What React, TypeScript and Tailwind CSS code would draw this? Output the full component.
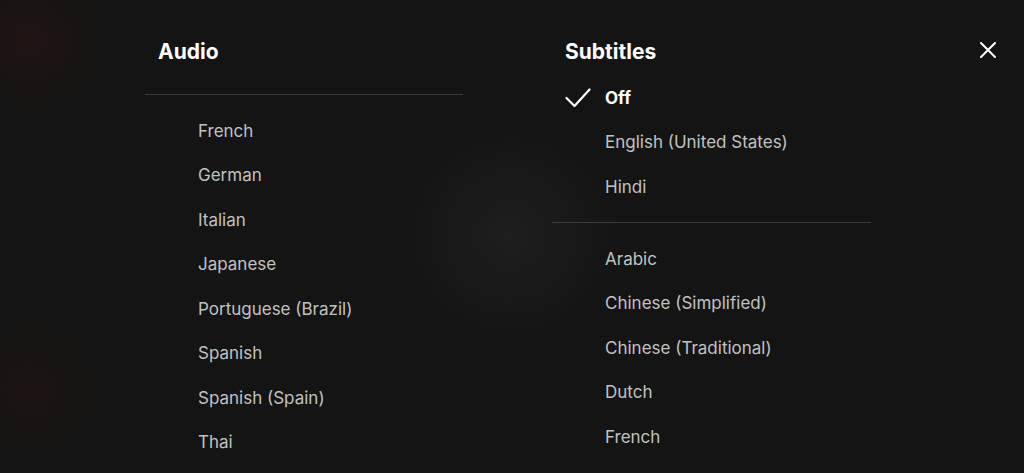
import React from "react";

const audio = ["French", "German", "Italian", "Japanese", "Portuguese (Brazil)", "Spanish", "Spanish (Spain)", "Thai"];
const subsTop = ["English (United States)", "Hindi"];
const subsBottom = ["Arabic", "Chinese (Simplified)", "Chinese (Traditional)", "Dutch", "French"];

function Item({ label }: { label: string }) {
  return (
    <div className="h-[44.5px] flex items-center pl-[53px] text-[17px] text-[#c2c2c2] leading-none">
      {label}
    </div>
  );
}

export default function App() {
  return (
    <div
      className="relative w-[1024px] h-[473px] overflow-hidden bg-[#141414] bg-[radial-gradient(circle_at_30px_40px,rgba(70,20,15,0.22),transparent_80px),radial-gradient(circle_at_30px_390px,rgba(60,20,15,0.2),transparent_80px),radial-gradient(circle_at_510px_235px,rgba(40,40,40,0.5),transparent_110px)]"
      style={{ fontFamily: "Inter, 'Noto Sans', sans-serif" }}
    >
      <div className="flex pl-[145px] pt-[29px] gap-[89px]">
        {/* Audio column */}
        <div className="w-[318px] flex flex-col">
          <div className="h-[44px] flex items-center pl-[13px] text-[21px] font-bold text-white leading-none">
            Audio
          </div>
          <div className="mt-[21px] h-px bg-[#3c3c3c]" />
          <div className="mt-[13.75px] flex flex-col">
            {audio.map((a) => (
              <Item key={a} label={a} />
            ))}
          </div>
        </div>

        {/* Subtitles column */}
        <div className="w-[319px] flex flex-col">
          <div className="h-[44px] flex items-center pl-[13px] text-[21px] font-bold text-white leading-none">
            Subtitles
          </div>
          <div className="mt-[2.75px] flex flex-col">
            <div className="h-[44.5px] flex items-center text-[17px] font-bold text-white leading-none">
              <div className="w-[53px] flex justify-start pl-[13px]">
                <svg width="26" height="20" viewBox="0 0 26 20" fill="none">
                  <path d="M1.5 10 L9.5 18 L24.5 1.5" stroke="white" strokeWidth="2.2" strokeLinecap="round" strokeLinejoin="round" />
                </svg>
              </div>
              Off
            </div>
            {subsTop.map((s) => (
              <Item key={s} label={s} />
            ))}
          </div>
          <div className="mt-[13px] h-px bg-[#3c3c3c]" />
          <div className="mt-[13.75px] flex flex-col">
            {subsBottom.map((s) => (
              <Item key={s} label={s} />
            ))}
          </div>
        </div>
      </div>

      <button className="absolute left-[979px] top-[41px] w-[18px] h-[18px] flex items-center justify-center">
        <svg width="18" height="18" viewBox="0 0 18 18" fill="none">
          <path d="M2 2 L16 16 M16 2 L2 16" stroke="white" strokeWidth="2" strokeLinecap="round" />
        </svg>
      </button>
    </div>
  );
}
